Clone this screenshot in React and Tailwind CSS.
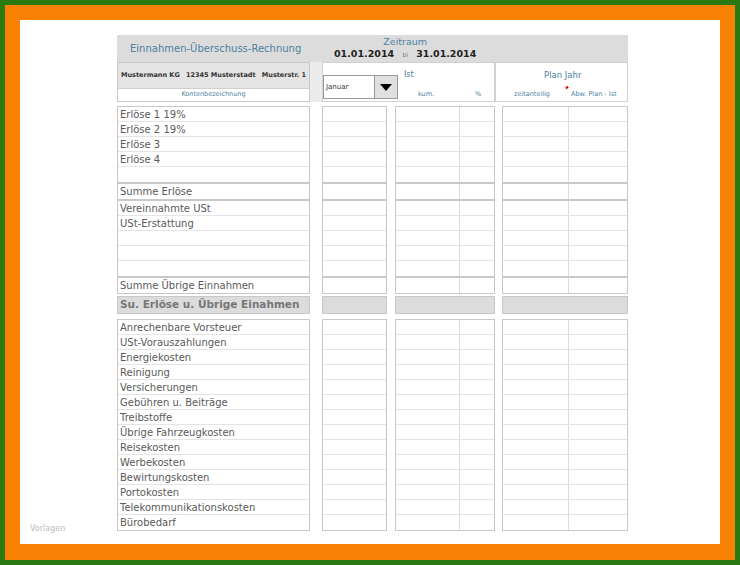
const sec1 = ["Erlöse 1 19%", "Erlöse 2 19%", "Erlöse 3", "Erlöse 4", ""];
const sec2 = ["Summe Erlöse"];
const sec3 = ["Vereinnahmte USt", "USt-Erstattung", "", "", ""];
const sec4 = ["Summe Übrige Einnahmen"];
const sec5 = [
  "Anrechenbare Vorsteuer",
  "USt-Vorauszahlungen",
  "Energiekosten",
  "Reinigung",
  "Versicherungen",
  "Gebühren u. Beiträge",
  "Treibstoffe",
  "Übrige Fahrzeugkosten",
  "Reisekosten",
  "Werbekosten",
  "Bewirtungskosten",
  "Portokosten",
  "Telekommunikationskosten",
  "Bürobedarf",
];

function Col({ rows, w, split, label, bg = "bg-white", h = "h-[15px]", text = "text-[10px]" }) {
  return (
    <div className={`border border-[#c8c8c8] ${bg} ${w} shrink-0`}>
      {rows.map((r, i) => (
        <div key={i} className={`${h} flex border-b border-[#e4e4e4] last:border-b-0`}>
          {label ? (
            <span className={`px-[2px] ${text} leading-[15px] text-[#5a5a5a] whitespace-nowrap overflow-hidden`}>{r}</span>
          ) : split ? (
            <>
              <div className={`${split} border-r border-[#dcdcdc]`} />
              <div className="flex-1" />
            </>
          ) : null}
        </div>
      ))}
    </div>
  );
}

function Section({ rows, bg, h, text, mt = "mt-0" }) {
  return (
    <div className={`flex ${mt}`}>
      <Col rows={rows} w="w-[193px]" label bg={bg} h={h} text={text} />
      <div className="w-[12px]" />
      <Col rows={rows} w="w-[65px]" bg={bg} h={h} />
      <div className="w-[8px]" />
      <Col rows={rows} w="w-[100px]" split="w-[64px]" bg={bg} h={h} />
      <div className="w-[7px]" />
      <Col rows={rows} w="w-[126px]" split="w-[66px]" bg={bg} h={h} />
    </div>
  );
}

export default function App() {
  return (
    <div className="w-[740px] h-[565px] bg-[#2a7a12] p-[5px]" style={{ fontFamily: '"DejaVu Sans", "Liberation Sans", sans-serif' }}>
      <div className="h-full bg-[#f98205] pt-[15px] px-[15px] pb-[16px]">
        <div className="h-full bg-white relative overflow-hidden pl-[97px] pt-[15px]">
          <div className="w-[511px]">
            <div className="h-[27px] bg-[#dcdcdc] flex items-center">
              <span className="ml-[13px] text-[10px] text-[#4d82a0] w-[200px]">Einnahmen-Überschuss-Rechnung</span>
              <div className="flex flex-col items-center ml-[4px]">
                <span className="text-[9.5px] text-[#4d82a0] leading-[12px]">Zeitraum</span>
                <span className="text-[9.5px] font-bold text-[#222] leading-[12px]">
                  01.01.2014 <span className="text-[6px] font-normal text-[#777] mx-[5px]">bi</span> 31.01.2014
                </span>
              </div>
            </div>
            <div className="flex h-[40px]">
              <div className="w-[193px] shrink-0 flex flex-col border border-[#c8c8c8]">
                <div className="h-[25px] bg-[#e4e4e4] flex items-center justify-between px-[3px] text-[6.5px] font-bold text-[#333]">
                  <span>Mustermann KG</span><span>12345 Musterstadt</span><span>Musterstr. 1</span>
                </div>
                <div className="flex-1 flex items-center justify-center text-[6.5px] text-[#4d82a0] border-t border-[#d0d0d0]">Kontenbezeichnung</div>
              </div>
              <div className="w-[12px] bg-[#ececec]" />
              <div className="w-[173px] shrink-0 border border-[#d0d0d0] relative">
                <div className="absolute left-0 top-[12px] w-[75px] h-[24px] border border-[#999] flex bg-white">
                  <span className="text-[7px] text-[#333] pl-[2px] pt-[6px] flex-1">Januar</span>
                  <div className="w-[23px] bg-[#e0e0e0] border-l border-[#999] flex items-center justify-center">
                    <div className="w-0 h-0 border-l-[6px] border-r-[6px] border-t-[7px] border-l-transparent border-r-transparent border-t-black" />
                  </div>
                </div>
                <span className="absolute left-[81px] top-[6px] text-[8px] text-[#4d82a0]">Ist</span>
                <span className="absolute left-[95px] top-[27px] text-[6.5px] text-[#4d82a0]">kum.</span>
                <span className="absolute left-[152px] top-[27px] text-[6.5px] text-[#4d82a0]">%</span>
              </div>
              <div className="w-[133px] shrink-0 border border-[#d0d0d0] relative">
                <span className="absolute left-[48px] top-[6px] text-[8.5px] text-[#4d82a0]">Plan Jahr</span>
                <span className="absolute left-[18px] top-[27px] text-[6.5px] text-[#4d82a0]">zeitanteilig</span>
                <div className="absolute left-[70px] top-[23px] w-[2px] h-[3px] bg-red-600 rotate-45" />
                <span className="absolute left-[75px] top-[27px] text-[6.5px] text-[#4d82a0]">Abw. Plan - Ist</span>
              </div>
            </div>
            <div className="h-[4px]" />
            <Section rows={sec1} />
            <Section rows={sec2} />
            <Section rows={sec3} />
            <Section rows={sec4} />
            <Section rows={["Su. Erlöse u. Übrige Einahmen"]} bg="bg-[#dcdcdc]" h="h-[16px]" text="text-[10.5px] font-semibold !text-[#777]" mt="mt-[2px]" />
            <Section rows={sec5} mt="mt-[5px]" />
          </div>
          <span className="absolute left-[10px] bottom-[9px] text-[8px] text-[#bbb]">Vorlagen</span>
        </div>
      </div>
    </div>
  );
}
